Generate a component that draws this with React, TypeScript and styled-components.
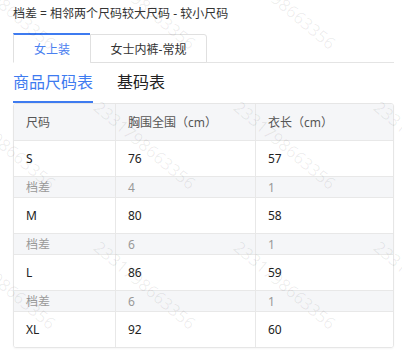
import styled, { createGlobalStyle } from 'styled-components';

const GlobalStyle = createGlobalStyle`
  body {
    margin: 0;
    background: #fff;
    font-family: "Noto Sans", "Noto Sans CJK SC", sans-serif;
  }
  * {
    box-sizing: border-box;
  }
`;

const Page = styled.div`
  position: relative;
  width: 402px;
  height: 352px;
  overflow: hidden;
  padding: 4px 8px 0 13px;
`;

const Note = styled.div`
  font-size: 12px;
  line-height: 20px;
  color: #333;
  margin-bottom: 9px;
`;

const TabBar = styled.div`
  display: flex;
  border-bottom: 1px solid #e4e4e4;
  height: 30px;
`;

const Tab = styled.div<{ $active?: boolean; $width: number }>`
  display: flex;
  align-items: center;
  justify-content: center;
  width: ${(p) => p.$width}px;
  height: ${(p) => (p.$active ? '30px' : '29px')};
  margin-top: ${(p) => (p.$active ? '0' : '1px')};
  margin-bottom: -1px;
  font-size: 12px;
  color: ${(p) => (p.$active ? '#4a80f0' : '#333')};
  background: #fff;
  border: 1px solid #e0e0e0;
  border-top: ${(p) => (p.$active ? '2px solid #3e7bf0' : '1px solid #e0e0e0')};
  border-bottom-color: ${(p) => (p.$active ? '#fff' : '#e0e0e0')};
  border-right: ${(p) => (p.$active ? 'none' : '1px solid #e0e0e0')};
  border-top-right-radius: ${(p) => (p.$active ? '0' : '3px')};
`;

const SubTabs = styled.div`
  display: flex;
  gap: 24px;
`;

const SubTab = styled.div<{ $active?: boolean }>`
  height: 40px;
  line-height: 38px;
  font-size: 16px;
  color: ${(p) => (p.$active ? '#3e7bf0' : '#222')};
  border-bottom: 2px solid ${(p) => (p.$active ? '#3e7bf0' : 'transparent')};
`;

const Table = styled.div`
  width: 381px;
  border: 1px solid #e6e6e6;
  border-radius: 3px;
  overflow: hidden;
  box-shadow: 0 1px 2px rgba(0, 0, 0, 0.04);
`;

const Row = styled.div<{ $kind: 'head' | 'data' | 'diff' }>`
  display: grid;
  grid-template-columns: 101px 140px 1fr;
  height: ${(p) => (p.$kind === 'diff' ? 21 : 36)}px;
  background: ${(p) => (p.$kind === 'data' ? '#fff' : '#f5f6f8')};
  color: ${(p) => (p.$kind === 'head' ? '#555' : p.$kind === 'data' ? '#222' : '#999')};
  font-size: 12px;
  & + & {
    border-top: 1px solid #e8e8e8;
  }
`;

const Cell = styled.div`
  display: flex;
  align-items: center;
  padding-left: 12px;
  & + & {
    border-left: 1px solid #e8e8e8;
  }
`;

const Watermarks = styled.div`
  position: absolute;
  top: -40px;
  left: -40px;
  display: grid;
  grid-template-columns: repeat(4, 140px);
  grid-auto-rows: 140px;
  pointer-events: none;
`;

const Mark = styled.div`
  transform-origin: 0 0;
  transform: rotate(40deg) translate(0, -6px);
  font-size: 17px;
  color: rgba(0, 0, 0, 0.065);
  white-space: nowrap;
  font-family: "Noto Sans", sans-serif;
`;

const rows: { kind: 'data' | 'diff'; cells: string[] }[] = [
  { kind: 'data', cells: ['S', '76', '57'] },
  { kind: 'diff', cells: ['档差', '4', '1'] },
  { kind: 'data', cells: ['M', '80', '58'] },
  { kind: 'diff', cells: ['档差', '6', '1'] },
  { kind: 'data', cells: ['L', '86', '59'] },
  { kind: 'diff', cells: ['档差', '6', '1'] },
  { kind: 'data', cells: ['XL', '92', '60'] },
];

export default function App() {
  return (
    <Page>
      <GlobalStyle />
      <Note>档差 = 相邻两个尺码较大尺码 - 较小尺码</Note>
      <TabBar>
        <Tab $active $width={77}>女上装</Tab>
        <Tab $width={117}>女士内裤-常规</Tab>
      </TabBar>
      <SubTabs>
        <SubTab $active>商品尺码表</SubTab>
        <SubTab>基码表</SubTab>
      </SubTabs>
      <Table>
        <Row $kind="head">
          <Cell>尺码</Cell>
          <Cell>胸围全围（cm）</Cell>
          <Cell>衣长（cm）</Cell>
        </Row>
        {rows.map((r, i) => (
          <Row key={i} $kind={r.kind}>
            {r.cells.map((c, j) => (
              <Cell key={j}>{c}</Cell>
            ))}
          </Row>
        ))}
      </Table>
      <Watermarks>
        {Array.from({ length: 12 }).map((_, i) => (
          <Mark key={i}>2331798663356</Mark>
        ))}
      </Watermarks>
    </Page>
  );
}
